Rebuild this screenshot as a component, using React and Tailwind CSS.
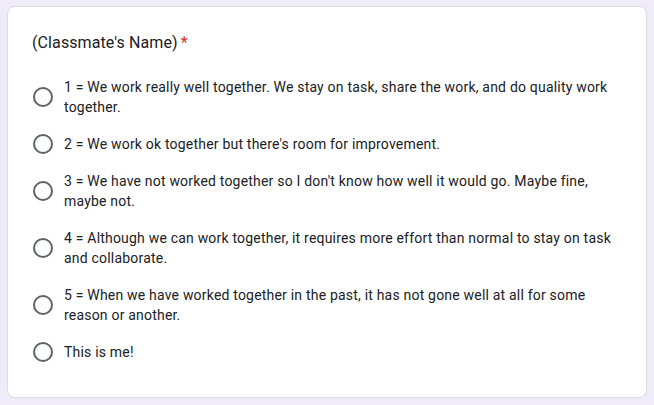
const options = [
  '1 = We work really well together. We stay on task, share the work, and do quality work together.',
  "2 = We work ok together but there's room for improvement.",
  "3 = We have not worked together so I don't know how well it would go. Maybe fine, maybe not.",
  '4 = Although we can work together, it requires more effort than normal to stay on task and collaborate.',
  '5 = When we have worked together in the past, it has not gone well at all for some reason or another.',
  'This is me!',
];

export default function App() {
  return (
    <div className="min-h-screen bg-[#f0ebf8] pl-[7px] pr-[8px] pt-[6px] pb-[7px] font-['Roboto',sans-serif]">
      <div className="w-[640px] h-[392px] bg-white border border-[#dadce0] rounded-lg pt-6 pl-6 pr-6">
        <div className="text-[16px] leading-6 text-[#202124] tracking-[0.1px]">
          (Classmate's Name)<span className="text-[#d93025] pl-[3px]">*</span>
        </div>

        <div className="mt-[22px] flex flex-col gap-[17px]">
          {options.map((o) => (
            <div key={o} className="flex items-center">
              <div className="ml-[1px] w-5 h-5 shrink-0 rounded-full border-2 border-[#5f6368]"></div>
              <div className="ml-[11px] text-[14px] leading-5 text-[#202124] tracking-[0.2px]">{o}</div>
            </div>
          ))}
        </div>
      </div>
    </div>
  );
}
